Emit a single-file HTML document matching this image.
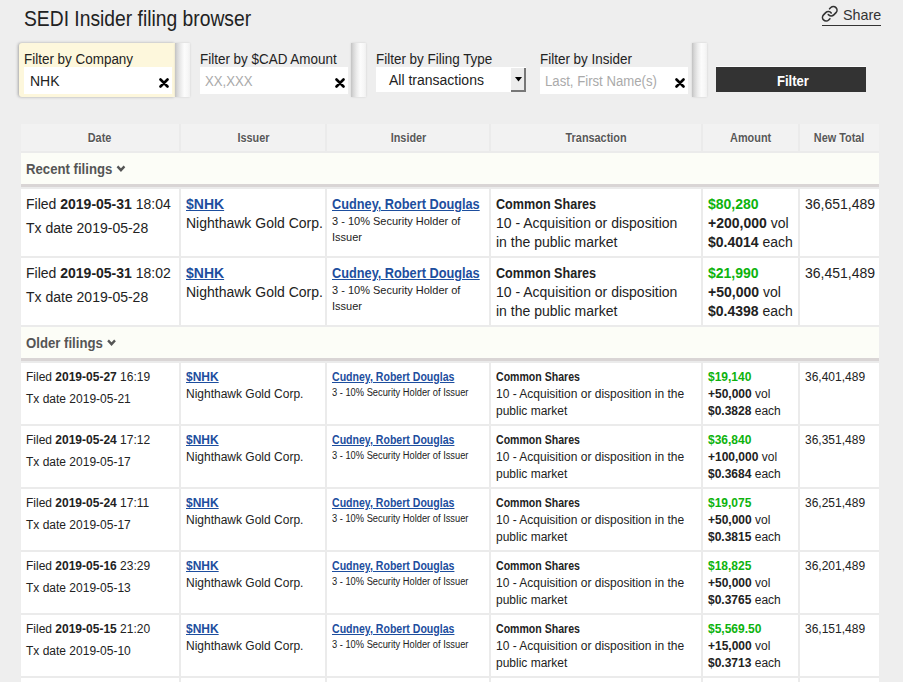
<!DOCTYPE html>
<html><head><meta charset="utf-8">
<style>
*{margin:0;padding:0;box-sizing:border-box}
html,body{width:903px;height:682px;overflow:hidden;background:#eeeeee;font-family:"Liberation Sans",sans-serif;color:#222}
.abs{position:absolute;white-space:nowrap}
#title{left:24px;top:9px;font-size:21.3px;line-height:21px;color:#222;transform-origin:0 0;transform:scaleX(0.905)}
#sharetxt{left:843px;top:4.5px;font-size:15px;line-height:20px;color:#333;transform-origin:0 0;transform:scaleX(0.955)}
#shareline{position:absolute;left:822px;top:24.5px;width:59px;height:1.5px;background:#333}
#chain{position:absolute;left:821px;top:5px;width:17.5px;height:17.5px}
.fbox{position:absolute;top:43px;height:54px;width:156px}
.fbox.active{background:#fdf7dc;border-radius:3px 0 0 3px;box-shadow:-1px 0 3px rgba(0,0,0,.3)}
.flabel{position:absolute;left:5px;top:8px;font-size:14px;line-height:16px;color:#222;white-space:nowrap;transform-origin:0 0;transform:scaleX(0.96)}
.finput{position:absolute;left:5px;top:24px;width:148px;height:27px;background:#fff}
.fv{position:absolute;left:6px;top:1px;font-size:14px;line-height:27px;white-space:nowrap;transform-origin:0 0}
.ph .fv{color:#aaa;left:5px;transform:scaleX(0.94)}
.xm{position:absolute;left:135px;top:11px;width:10px;height:10px}
.strip{position:absolute;top:43px;height:54px;width:15px;background:linear-gradient(to right,#c2c2c2 0%,#d6d6d6 14%,#ececec 38%,#fcfcfc 62%,#f7f7f7 85%,#f0f0f0 100%);box-shadow:0 0 2px rgba(0,0,0,.12)}
#sel{position:absolute;left:376px;top:67px;width:150px;height:25px;background:#fff}
#sel .fv{left:13px;top:1px;line-height:25px}
#selbtn{position:absolute;left:135px;top:1px;width:15px;height:24px;background:#ececec;border-right:2px solid #777;border-bottom:2px solid #777}
#selbtn svg{position:absolute;left:4px;top:9px;width:7px;height:5px}
#btn{position:absolute;left:716px;top:67px;width:150px;height:25px;background:#333;color:#fff;font-weight:bold;font-size:14px;line-height:25px;text-align:center;box-shadow:0 -1px 0 #fafafa}
#btn span{position:absolute;left:61px;top:2px;transform-origin:0 0;transform:scaleX(0.93)}
#tbl{position:absolute;left:0;top:0;width:903px;height:682px}
#tbl>div{position:absolute}
#tblbg{left:21px;top:124px;width:858px;height:558px;background:#ebebeb}
.th{top:124px;height:27px;background:#f2f2f2;color:#585858;text-shadow:0 1px 1px #fff;font-weight:bold;font-size:12.5px;line-height:29px;text-align:center;white-space:nowrap}
.th span{display:inline-block;transform:scaleX(0.87)}
.sec{left:21px;width:858px;height:34px;background:#fcfdf7;border-bottom:3px solid #d9d5d5}
.sl{position:absolute;left:5px;top:8px;font-size:14px;line-height:16px;font-weight:bold;color:#555;white-space:nowrap;transform-origin:0 0;transform:scaleX(0.94)}
.chev{display:inline-block;margin-left:4px;vertical-align:2.5px;width:10px;height:7px;overflow:visible}
.td{background:#fff;overflow:hidden}
.sx{position:absolute;left:5px;white-space:nowrap;transform-origin:0 0}
.td.r .sx{top:6px;font-size:14px;line-height:19px}
.td.o .sx{top:6px;font-size:12px;line-height:17px}
.td.r .tx{margin-top:5px}
.td.o .tx{margin-top:5px}
.td.r .role{font-size:11px;line-height:16px;margin-top:-1px}
.td.o .role{font-size:10px;line-height:13px;display:block;transform-origin:0 0;transform:scaleX(0.93)}
a{color:#1d4e9e;font-weight:bold;text-decoration:underline;display:inline-block;transform-origin:0 0}
.r .nm{transform:scaleX(0.91)}
.o .nm{transform:scaleX(0.88)}
b{font-weight:bold}
.cs{display:inline-block;transform-origin:0 0}
.r .cs{transform:scaleX(0.9)}
.o .cs{transform:scaleX(0.88)}
.g{color:#0db30d}
</style></head><body>
<div id="title" class="abs">SEDI Insider filing browser</div>
<svg id="chain" viewBox="0 0 24 24"><g fill="none" stroke="#333" stroke-width="2.2" stroke-linecap="round" stroke-linejoin="round"><path d="M10 13a5 5 0 0 0 7.54.54l3-3a5 5 0 0 0-7.07-7.07l-1.72 1.71"/><path d="M14 11a5 5 0 0 0-7.54-.54l-3 3a5 5 0 0 0 7.07 7.07l1.71-1.71"/></g></svg>
<div id="sharetxt" class="abs">Share</div>
<div id="shareline"></div>

<div class="fbox active" style="left:19px"><div class="flabel">Filter by Company</div><div class="finput"><div class="fv">NHK</div><svg class="xm" viewBox="0 0 10 10"><path d="M1.5 1.5L8.5 8.5M8.5 1.5L1.5 8.5" stroke="#000" stroke-width="2.6" stroke-linecap="round"/></svg></div></div>
<div class="strip" style="left:175px"></div>
<div class="fbox" style="left:195px"><div class="flabel">Filter by $CAD Amount</div><div class="finput ph"><div class="fv">XX,XXX</div><svg class="xm" viewBox="0 0 10 10"><path d="M1.5 1.5L8.5 8.5M8.5 1.5L1.5 8.5" stroke="#000" stroke-width="2.6" stroke-linecap="round"/></svg></div></div>
<div class="strip" style="left:351px"></div>
<div class="fbox" style="left:371px"><div class="flabel">Filter by Filing Type</div></div>
<div id="sel"><div class="fv">All transactions</div><div id="selbtn"><svg viewBox="0 0 7 5"><path d="M0 0H7L3.5 4.5Z" fill="#000"/></svg></div></div>
<div class="fbox" style="left:535px"><div class="flabel">Filter by Insider</div><div class="finput ph"><div class="fv">Last, First Name(s)</div><svg class="xm" viewBox="0 0 10 10"><path d="M1.5 1.5L8.5 8.5M8.5 1.5L1.5 8.5" stroke="#000" stroke-width="2.6" stroke-linecap="round"/></svg></div></div>
<div class="strip" style="left:692px"></div>
<div id="btn"><span>Filter</span></div>
<div id="tbl"><div id="tblbg"></div>
<div class="th" style="left:21px;width:158px"><span>Date</span></div>
<div class="th" style="left:181px;width:144px"><span>Issuer</span></div>
<div class="th" style="left:327px;width:162px"><span>Insider</span></div>
<div class="th" style="left:491px;width:210px"><span>Transaction</span></div>
<div class="th" style="left:703px;width:95px"><span>Amount</span></div>
<div class="th" style="left:800px;width:79px"><span>New Total</span></div>
<div class="sec" style="top:153px"><span class="sl">Recent filings<svg class="chev" viewBox="0 0 10 7"><path d="M1.3 1.3L5 5.2L8.7 1.3" fill="none" stroke="#555" stroke-width="2.5"/></svg></span></div>
<div class="td r" style="left:21px;top:189px;width:158px;height:67px"><div class="sx rd"><div>Filed <b>2019-05-31</b> 18:04</div><div class="tx">Tx date 2019-05-28</div></div></div>
<div class="td r" style="left:181px;top:189px;width:144px;height:67px"><div class="sx ri"><a>$NHK</a><br>Nighthawk Gold Corp.</div></div>
<div class="td r" style="left:327px;top:189px;width:162px;height:67px"><div class="sx rn"><a class="nm">Cudney, Robert Douglas</a><div class="role">3 - 10% Security Holder of<br>Issuer</div></div></div>
<div class="td r" style="left:491px;top:189px;width:210px;height:67px"><div class="sx rt"><b class="cs">Common Shares</b><br>10 - Acquisition or disposition <br>in the public market</div></div>
<div class="td r" style="left:703px;top:189px;width:95px;height:67px"><div class="sx ra"><b class="g">$80,280</b><br><b>+200,000</b> vol<br><b>$0.4014</b> each</div></div>
<div class="td r" style="left:800px;top:189px;width:79px;height:67px"><div class="sx ro">36,651,489</div></div>
<div class="td r" style="left:21px;top:258px;width:158px;height:67px"><div class="sx rd"><div>Filed <b>2019-05-31</b> 18:02</div><div class="tx">Tx date 2019-05-28</div></div></div>
<div class="td r" style="left:181px;top:258px;width:144px;height:67px"><div class="sx ri"><a>$NHK</a><br>Nighthawk Gold Corp.</div></div>
<div class="td r" style="left:327px;top:258px;width:162px;height:67px"><div class="sx rn"><a class="nm">Cudney, Robert Douglas</a><div class="role">3 - 10% Security Holder of<br>Issuer</div></div></div>
<div class="td r" style="left:491px;top:258px;width:210px;height:67px"><div class="sx rt"><b class="cs">Common Shares</b><br>10 - Acquisition or disposition <br>in the public market</div></div>
<div class="td r" style="left:703px;top:258px;width:95px;height:67px"><div class="sx ra"><b class="g">$21,990</b><br><b>+50,000</b> vol<br><b>$0.4398</b> each</div></div>
<div class="td r" style="left:800px;top:258px;width:79px;height:67px"><div class="sx ro">36,451,489</div></div>
<div class="sec" style="top:327px"><span class="sl">Older filings<svg class="chev" viewBox="0 0 10 7"><path d="M1.3 1.3L5 5.2L8.7 1.3" fill="none" stroke="#555" stroke-width="2.5"/></svg></span></div>
<div class="td o" style="left:21px;top:363px;width:158px;height:61px"><div class="sx od"><div>Filed <b>2019-05-27</b> 16:19</div><div class="tx">Tx date 2019-05-21</div></div></div>
<div class="td o" style="left:181px;top:363px;width:144px;height:61px"><div class="sx oi"><a>$NHK</a><br>Nighthawk Gold Corp.</div></div>
<div class="td o" style="left:327px;top:363px;width:162px;height:61px"><div class="sx on"><a class="nm">Cudney, Robert Douglas</a><div class="role">3 - 10% Security Holder of Issuer</div></div></div>
<div class="td o" style="left:491px;top:363px;width:210px;height:61px"><div class="sx ot"><b class="cs">Common Shares</b><br>10 - Acquisition or disposition in the<br>public market</div></div>
<div class="td o" style="left:703px;top:363px;width:95px;height:61px"><div class="sx oa"><b class="g">$19,140</b><br><b>+50,000</b> vol<br><b>$0.3828</b> each</div></div>
<div class="td o" style="left:800px;top:363px;width:79px;height:61px"><div class="sx oo">36,401,489</div></div>
<div class="td o" style="left:21px;top:426px;width:158px;height:61px"><div class="sx od"><div>Filed <b>2019-05-24</b> 17:12</div><div class="tx">Tx date 2019-05-17</div></div></div>
<div class="td o" style="left:181px;top:426px;width:144px;height:61px"><div class="sx oi"><a>$NHK</a><br>Nighthawk Gold Corp.</div></div>
<div class="td o" style="left:327px;top:426px;width:162px;height:61px"><div class="sx on"><a class="nm">Cudney, Robert Douglas</a><div class="role">3 - 10% Security Holder of Issuer</div></div></div>
<div class="td o" style="left:491px;top:426px;width:210px;height:61px"><div class="sx ot"><b class="cs">Common Shares</b><br>10 - Acquisition or disposition in the<br>public market</div></div>
<div class="td o" style="left:703px;top:426px;width:95px;height:61px"><div class="sx oa"><b class="g">$36,840</b><br><b>+100,000</b> vol<br><b>$0.3684</b> each</div></div>
<div class="td o" style="left:800px;top:426px;width:79px;height:61px"><div class="sx oo">36,351,489</div></div>
<div class="td o" style="left:21px;top:489px;width:158px;height:61px"><div class="sx od"><div>Filed <b>2019-05-24</b> 17:11</div><div class="tx">Tx date 2019-05-17</div></div></div>
<div class="td o" style="left:181px;top:489px;width:144px;height:61px"><div class="sx oi"><a>$NHK</a><br>Nighthawk Gold Corp.</div></div>
<div class="td o" style="left:327px;top:489px;width:162px;height:61px"><div class="sx on"><a class="nm">Cudney, Robert Douglas</a><div class="role">3 - 10% Security Holder of Issuer</div></div></div>
<div class="td o" style="left:491px;top:489px;width:210px;height:61px"><div class="sx ot"><b class="cs">Common Shares</b><br>10 - Acquisition or disposition in the<br>public market</div></div>
<div class="td o" style="left:703px;top:489px;width:95px;height:61px"><div class="sx oa"><b class="g">$19,075</b><br><b>+50,000</b> vol<br><b>$0.3815</b> each</div></div>
<div class="td o" style="left:800px;top:489px;width:79px;height:61px"><div class="sx oo">36,251,489</div></div>
<div class="td o" style="left:21px;top:552px;width:158px;height:61px"><div class="sx od"><div>Filed <b>2019-05-16</b> 23:29</div><div class="tx">Tx date 2019-05-13</div></div></div>
<div class="td o" style="left:181px;top:552px;width:144px;height:61px"><div class="sx oi"><a>$NHK</a><br>Nighthawk Gold Corp.</div></div>
<div class="td o" style="left:327px;top:552px;width:162px;height:61px"><div class="sx on"><a class="nm">Cudney, Robert Douglas</a><div class="role">3 - 10% Security Holder of Issuer</div></div></div>
<div class="td o" style="left:491px;top:552px;width:210px;height:61px"><div class="sx ot"><b class="cs">Common Shares</b><br>10 - Acquisition or disposition in the<br>public market</div></div>
<div class="td o" style="left:703px;top:552px;width:95px;height:61px"><div class="sx oa"><b class="g">$18,825</b><br><b>+50,000</b> vol<br><b>$0.3765</b> each</div></div>
<div class="td o" style="left:800px;top:552px;width:79px;height:61px"><div class="sx oo">36,201,489</div></div>
<div class="td o" style="left:21px;top:615px;width:158px;height:61px"><div class="sx od"><div>Filed <b>2019-05-15</b> 21:20</div><div class="tx">Tx date 2019-05-10</div></div></div>
<div class="td o" style="left:181px;top:615px;width:144px;height:61px"><div class="sx oi"><a>$NHK</a><br>Nighthawk Gold Corp.</div></div>
<div class="td o" style="left:327px;top:615px;width:162px;height:61px"><div class="sx on"><a class="nm">Cudney, Robert Douglas</a><div class="role">3 - 10% Security Holder of Issuer</div></div></div>
<div class="td o" style="left:491px;top:615px;width:210px;height:61px"><div class="sx ot"><b class="cs">Common Shares</b><br>10 - Acquisition or disposition in the<br>public market</div></div>
<div class="td o" style="left:703px;top:615px;width:95px;height:61px"><div class="sx oa"><b class="g">$5,569.50</b><br><b>+15,000</b> vol<br><b>$0.3713</b> each</div></div>
<div class="td o" style="left:800px;top:615px;width:79px;height:61px"><div class="sx oo">36,151,489</div></div>
<div class="td o" style="left:21px;top:678px;width:158px;height:61px"><div class="sx od"><div>Filed <b>2019-05-14</b> 20:00</div><div class="tx">Tx date 2019-05-09</div></div></div>
<div class="td o" style="left:181px;top:678px;width:144px;height:61px"><div class="sx oi"><a>$NHK</a><br>Nighthawk Gold Corp.</div></div>
<div class="td o" style="left:327px;top:678px;width:162px;height:61px"><div class="sx on"><a class="nm">Cudney, Robert Douglas</a><div class="role">3 - 10% Security Holder of Issuer</div></div></div>
<div class="td o" style="left:491px;top:678px;width:210px;height:61px"><div class="sx ot"><b class="cs">Common Shares</b><br>10 - Acquisition or disposition in the<br>public market</div></div>
<div class="td o" style="left:703px;top:678px;width:95px;height:61px"><div class="sx oa"><b class="g">$5,000</b><br><b>+15,000</b> vol<br><b>$0.3700</b> each</div></div>
<div class="td o" style="left:800px;top:678px;width:79px;height:61px"><div class="sx oo">36,136,489</div></div>
</div>
</body></html>
